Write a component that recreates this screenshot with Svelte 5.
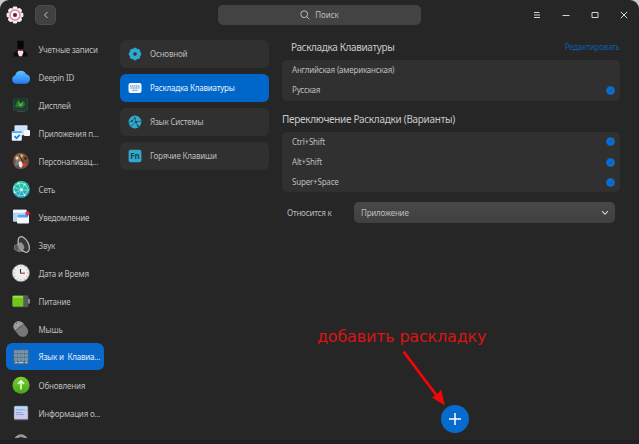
<script>
  const categories = [
    ['accounts', 'Учетные записи'],
    ['cloud', 'Deepin ID'],
    ['display', 'Дисплей'],
    ['apps', 'Приложения п...'],
    ['palette', 'Персонализац...'],
    ['network', 'Сеть'],
    ['notify', 'Уведомление'],
    ['sound', 'Звук'],
    ['clock', 'Дата и Время'],
    ['power', 'Питание'],
    ['mouse', 'Мышь'],
    ['keyboard', 'Язык и\u00a0 Клавиа...'],
    ['update', 'Обновления'],
    ['info', 'Информация о...'],
    ['boot', '']
  ];
  let active = $state('keyboard');

  const pages = [
    ['general', 'Основной'],
    ['layout', 'Раскладка Клавиатуры'],
    ['language', 'Язык Системы'],
    ['shortcuts', 'Горячие Клавиши']
  ];
  let page = $state('layout');

  const layouts = [
    ['Английская (американская)', false],
    ['Русская', true]
  ];
  const switches = [
    ['Ctrl+Shift', true],
    ['Alt+Shift', true],
    ['Super+Space', true]
  ];
  const spokes = [0, 45, 90, 135, 180, 225, 270, 315];
  const ticks = [0, 30, 60, 90, 120, 150, 180, 210, 240, 270, 300, 330];
</script>

{#snippet rows(list)}
  <ul class="panel">
    {#each list as [label, checked]}
      <li>
        <span>{label}</span>
        {#if checked}
          <svg width="9" height="9" viewBox="0 0 9 9"><circle cx="4.5" cy="4.5" r="4.3" fill="#0a6fd2" /><path d="M2.7 4.6 4 5.8 6.4 3.2" fill="none" stroke="#0b4d90" stroke-width=".9" /></svg>
        {/if}
      </li>
    {/each}
  </ul>
{/snippet}

{#snippet icon(name)}
  <svg class="ico" width="20" height="20" viewBox="0 0 20 20">
    {#if name === 'accounts'}
      <path d="M3.500 17.500c-.5-3 1.500-5.500 5-6.500h4c3.500 1 5.500 3.500 5 6.500z" fill="#0b0b0d" />
      <path d="M7.300 1.800h6.400v6.500c0 3-1.600 4.200-3.200 4.200s-3.200-1.200-3.200-4.200z" fill="#060607" />
      <path d="m8.500 11 2 .8 2-.8 1 2-1.500 4.300H9l-1.500-4.300z" fill="#f3dde3" />
      <path d="m8 10 2.500.8L13 10v2l-2.500-.8L8 12z" fill="#a51e40" />
    {:else if name === 'cloud'}
      <defs><linearGradient id="cl" x2="0" y2="1"><stop stop-color="#62c2ff" /><stop offset="1" stop-color="#2379f4" /></linearGradient></defs>
      <path d="M5.800 16.800a4.400 4.400 0 0 1-.6-8.500A5.800 5.800 0 0 1 16.200 7.300 4.900 4.900 0 0 1 16.500 16.800z" fill="url(#cl)" />
    {:else if name === 'display'}
      <rect x="3" y="3.500" width="15" height="12" rx="1" fill="#34434a" />
      <rect x="3.800" y="4.200" width="13.400" height="10" fill="#124126" />
      <path d="M5 12c2-4 1-6 4-7l2 5 3-4 1 4-3 3z" fill="#26743a" />
      <path d="m8 6 2 3 3-3-1 5H9z" fill="#79a13b" />
      <path d="M7 16.500h8" stroke="#40484c" />
    {:else if name === 'apps'}
      <rect x="4.500" y="2.300" width="13" height="10" rx="1" fill="#cfe3f8" />
      <rect x="14" y="7" width="6" height="6" rx="1" fill="#f4f8fe" />
      <rect x="1.800" y="8.300" width="10" height="9.500" rx="1" fill="#eef5fd" />
      <path d="M1.800 9.200h10" stroke="#4ca7f6" stroke-width="1.800" />
      <path d="m4.500 13.200 2 2 3.400-3.400" fill="none" stroke="#1687ed" stroke-width="1.700" />
    {:else if name === 'palette'}
      <path d="M10 1.800c5 0 8.800 3.800 8.800 8.500 0 5-4 7.900-8 7.900-5 0-7.700-3.500-7.700-8S6 1.800 10 1.800z" fill="#76513e" />
      <path d="M5 6c2-3 6-4 9-2l-2 5-6 3z" fill="#9b745c" />
      <circle cx="7" cy="7" r="1.500" fill="#e7d9c8" /><circle cx="11.500" cy="4.700" r="1.300" fill="#e6b35b" /><circle cx="15.500" cy="7.500" r="1.300" fill="#33261f" />
      <circle cx="6.500" cy="13" r="1.600" fill="#3796c9" /><path d="m8.500 11 2.500-1 2 4-2 3-2-2z" fill="#f2f1ef" /><circle cx="14.500" cy="13.700" r="1.900" fill="#d6373a" />
      <path d="m9 4 4 7" stroke="#342720" />
    {:else if name === 'network'}
      <defs><linearGradient id="nt" x2="0" y2="1"><stop stop-color="#2bc9a0" /><stop offset="1" stop-color="#239cc7" /></linearGradient></defs>
      <circle cx="11.200" cy="10.400" r="8.600" fill="url(#nt)" />
      <path d="m3.500 8 5-4 6 1 4 6-4 5-6 1-4-4zm0 0 8 3 3-6m-3 6 3 5m-3-5-7 3m4-10 3 7 7 0m-10 6 3-6" fill="none" stroke="#a5efde" stroke-width=".7" />
      <g fill="#d9fff5"><circle cx="11.500" cy="10.700" r="1.300" /><circle cx="8.500" cy="4.500" r=".9" /><circle cx="14.500" cy="5.500" r=".9" /><circle cx="4.500" cy="13" r=".9" /><circle cx="14.500" cy="16" r=".9" /></g>
    {:else if name === 'notify'}
      <rect x="3" y="2.800" width="13.500" height="12" rx="1" fill="#b8d2ee" />
      <path d="M3 4.300h13.500" stroke="#f2f7fd" stroke-width="3" />
      <rect x="7" y="7" width="12" height="9.500" rx="1" fill="#f4f8fe" />
      <rect x="7.500" y="7.500" width="10.500" height="3" fill="#4ba7f3" />
      <circle cx="17.500" cy="6.500" r="2.200" fill="#df304b" />
    {:else if name === 'sound'}
      <path d="M4.500 10.500 8 9l1.500 8-5-2.500z" fill="#555" stroke="#999" stroke-width=".6" />
      <path d="m7 9.500 3-7.500 8 15.500-9.500-1z" fill="#777" />
      <ellipse cx="13.700" cy="9.500" rx="4.700" ry="8.400" transform="rotate(-27 13.700 9.500)" fill="#373737" stroke="#bcbcbc" stroke-width="1.200" />
      <ellipse cx="11.500" cy="11" rx="2.300" ry="4" transform="rotate(-27 11.500 11)" fill="#929292" />
    {:else if name === 'clock'}
      <circle cx="10.900" cy="10" r="8.600" fill="#eeeeed" stroke="#999" stroke-width=".5" />
      {#each ticks as a}<path d="M10.900 2.500v1.200" stroke="#888" stroke-width=".7" transform="rotate({a} 10.900 10)" />{/each}
      <path d="M10.500 6v4" stroke="#333" stroke-width="1.100" /><path d="M10.200 10.200h4.700" stroke="#bd2d42" stroke-width="1.200" />
    {:else if name === 'power'}
      <rect x="2.300" y="4.300" width="16" height="12" rx="1.500" fill="#555b5b" />
      <path d="M19 8v4.500" stroke="#ccc" stroke-width="1.200" />
      <rect x="2.500" y="4.800" width="10.800" height="10.700" rx="1" fill="#70c915" />
      <path d="M3 5.900h10" stroke="#a1e84a" stroke-width="1.500" />
    {:else if name === 'mouse'}
      <g transform="rotate(-38 10.800 10)"><rect x="5.300" y="1.500" width="11" height="17" rx="5.500" fill="#777" /><path d="M5.300 8c0-4 2.300-6.500 5.500-6.500S16.300 4 16.300 8z" fill="#999" /><path d="M5.300 8h11M10.800 2v6" stroke="#565656" stroke-width=".8" /><path d="M10.800 4v2.500" stroke="#ddd" /></g>
    {:else if name === 'keyboard'}
      <rect x="3.300" y="2.500" width="15.500" height="15" rx="1" fill="#456984" />
      {#each [3.500, 7.200, 10.900] as y}{#each [4.500, 8, 11.500, 15] as x}<rect {x} {y} width="2.600" height="2.600" rx=".5" fill="#718b9b" stroke="#a9bcc6" stroke-width=".4" />{/each}{/each}
      <path d="M5 15.500h2.500m1 0h5m1.500 0h2.500" stroke="#b5c3cc" stroke-width="1.300" />
    {:else if name === 'update'}
      <defs><linearGradient id="up" x2="0" y2="1"><stop stop-color="#77ce35" /><stop offset="1" stop-color="#45a713" /></linearGradient></defs>
      <circle cx="11" cy="10.200" r="8.500" fill="url(#up)" /><path d="M11 14.500v-8M7.900 9 11 5.900 14.100 9" fill="none" stroke="#eaffdb" stroke-width="1.600" />
    {:else if name === 'info'}
      <rect x="3.800" y="2.800" width="14.500" height="14.500" rx="1.500" fill="#6e7884" /><rect x="4.500" y="3.300" width="13" height="12.500" rx=".8" fill="#bfd6f6" /><rect x="4.500" y="9" width="13" height="6.800" fill="#d0c9ef" /><path d="M6 6.800h9.500M6 9.500h6.500M6 11.500h8" stroke="#7493bd" stroke-width=".7" />
    {:else}
      <circle cx="11" cy="10.500" r="7.200" fill="#999" /><circle cx="11" cy="10.500" r="4.600" fill="#333" /><circle cx="11" cy="9.500" r="1.900" fill="#ddd" />
    {/if}
  </svg>
{/snippet}

<div class="window">
  <header>
    <svg class="logo" width="18" height="18" viewBox="0 0 18 18">
      {#each spokes as a}<rect x="6.700" y=".6" width="4.600" height="5" rx="1.300" fill="#edf0f8" transform="rotate({a} 9 9)" />{/each}
      <circle cx="9" cy="9" r="6.900" fill="#edf0f8" /><circle cx="9" cy="9" r="5" fill="#fff" stroke="#ee7d92" stroke-width="1.500" /><circle cx="9" cy="9" r="2" fill="#3f3038" stroke="#b94a62" stroke-width=".4" />
    </svg>
    <button class="back" aria-label="Назад"><svg width="6" height="8" viewBox="0 0 6 8"><path d="M4.500 1 1.500 4l3 3" fill="none" stroke="#c5c5c5" /></svg></button>
    <div class="search">
      <svg width="10" height="10" viewBox="0 0 10 10"><circle cx="4.200" cy="4.200" r="3.400" fill="none" stroke="#bbb" /><path d="m6.700 6.700 2.700 2.700" stroke="#bbb" /></svg>
      <span>Поиск</span>
    </div>
    <div class="controls">
      <svg width="8" height="8" viewBox="0 0 8 8"><path d="M1 1.500h5.500M1 4h6M1 6.500h6" stroke="#d5d5d5" /></svg>
      <svg width="8" height="8" viewBox="0 0 8 8"><path d="M.5 4.500h7" stroke="#d5d5d5" /></svg>
      <svg width="8" height="8" viewBox="0 0 8 8"><path d="M1 1.500h6v5H1z" fill="none" stroke="#d5d5d5" /></svg>
      <svg width="8" height="8" viewBox="0 0 8 8"><path d="m.8.8 6.400 6.400M7.200.8.8 7.200" stroke="#d5d5d5" /></svg>
    </div>
  </header>

  <main>
    <nav class="side">
      {#each categories as [id, label]}
        <button class:active={active === id} onclick={() => (active = id)}>{@render icon(id)}<span>{label}</span></button>
      {/each}
    </nav>

    <nav class="pages">
      {#each pages as [id, label]}
        <button class:active={page === id} onclick={() => (page = id)}>
          <svg width="14" height="14" viewBox="0 0 14 14">
            {#if id === 'general'}
              {#each spokes as a}<rect x="5.300" y=".8" width="3.400" height="4" rx=".8" fill="#2fa9ce" transform="rotate({a} 7 7)" />{/each}
              <circle cx="7" cy="7" r="3.500" fill="none" stroke="#2fa9ce" stroke-width="3.400" />
            {:else if id === 'layout'}
              <rect x=".5" y="2" width="13" height="10" rx="2" fill="#f3f7ff" /><path d="M2 5h10M2.500 7h9M4.500 9.300h5" stroke="#4278c9" stroke-dasharray="1.300 .6" />
            {:else if id === 'language'}
              <circle cx="7" cy="7" r="6.400" fill="#2fa9ce" /><path d="M1 7c3 0 4-1 6-5m0 0 1 5 5-1M8 7l2 5M8 7l-5 4" fill="none" stroke="#24404a" stroke-width=".7" /><g fill="#24404a"><circle cx="8" cy="7" r="1.100" /><circle cx="4" cy="6" r=".9" /><circle cx="10" cy="11" r=".9" /></g>
            {:else}
              <rect x=".6" y=".8" width="12.800" height="12.400" rx="2" fill="#2fa9ce" /><text x="7" y="10.100" text-anchor="middle">Fn</text>
            {/if}
          </svg>
          <span>{label}</span>
        </button>
      {/each}
    </nav>

    <section>
      <div class="head"><h2>Раскладка Клавиатуры</h2><a href="#edit">Редактировать</a></div>
      {@render rows(layouts)}
      <h2 class="second">Переключение Раскладки (Варианты)</h2>
      {@render rows(switches)}
      <div class="scope">
        <span>Относится к</span>
        <div class="select"><span>Приложение</span><svg width="8" height="6" viewBox="0 0 8 6"><path d="m1 1.200 3 3 3-3" fill="none" stroke="#d0d0d0" stroke-width="1.100" /></svg></div>
      </div>
    </section>
  </main>

  <div class="note">добавить раскладку</div>
  <svg class="arrow" width="50" height="62" viewBox="0 0 50 62"><path d="M4.500 3.500 38 48" stroke="#f50505" stroke-width="2.800" /><path d="M46 57.500 33 49.500 38 46.500 42 41.500z" fill="#f50505" /></svg>
  <button class="add" aria-label="Добавить"><svg width="14" height="14" viewBox="0 0 14 14"><path d="M7 1v12M1 7h12" stroke="#fff" stroke-width="1.500" /></svg></button>
</div>

<style>
  :global(body) { margin: 0; background: #c9c9c9; }
  .window { position: relative; box-sizing: border-box; width: 639px; height: 444px; overflow: hidden; border-radius: 9px 9px 0 0; background: #262626; border-bottom: 4px solid #202020; color: #bebebe; font: 8px/12px "Noto Sans", "Open Sans", sans-serif; letter-spacing: -.2px; }
  button { display: flex; align-items: center; box-sizing: border-box; margin: 0; padding: 0; border: 0; background: none; color: inherit; font: inherit; letter-spacing: inherit; white-space: pre; }
  svg { display: block; flex: none; }
  header { display: flex; align-items: flex-start; height: 33px; }
  .logo { margin: 6px 0 0 6px; }
  .back { justify-content: center; width: 21px; height: 20px; margin: 5px 0 0 11px; border: 1px solid #4d4d4d; border-radius: 5px; background: #414141; }
  .search { display: flex; align-items: center; justify-content: center; gap: 5px; width: 203px; height: 20px; margin: 5px 0 0 162px; border-radius: 5px; background: #434343; letter-spacing: -.1px; }
  .controls { display: flex; gap: 21px; margin: 11px 0 0 112px; }
  main { display: flex; height: 405px; }
  .side { width: 98px; margin-left: 6px; padding-top: 2px; overflow: hidden; }
  .side button { width: 98px; height: 28px; padding-left: 4px; border-radius: 6px; }
  .side button span { margin-left: 8.500px; padding-top: 1px; }
  .side .active { background: #0868cb; color: #e4efff; background-clip: padding-box; border-bottom: 1px solid transparent; }
  .pages { display: flex; flex-direction: column; gap: 6px; width: 149px; margin-left: 16px; padding-top: 7px; }
  .pages button { height: 28px; padding-left: 8px; border-radius: 6px; background: #303030; }
  .pages button span { margin-left: 8px; }
  .pages .active { background: #0067ca; color: #e8f1ff; }
  text { font: bold 8px "Noto Sans", sans-serif; fill: #21404b; letter-spacing: 0; }
  section { width: 338px; margin-left: 13px; }
  .head { display: flex; justify-content: space-between; align-items: center; height: 27px; padding: 1px 0 0 9px; box-sizing: border-box; }
  h2 { margin: 0; font-size: 10px; line-height: 14px; font-weight: 400; color: #c8c8c8; letter-spacing: -.37px; }
  a { color: #0c5cac; text-decoration: none; }
  ul { list-style: none; margin: 0; padding: 0; border-radius: 5px; background: #303030; }
  li { display: flex; align-items: center; justify-content: space-between; height: 20.300px; padding: 0 5px 0 10px; }
  .second { margin: 11px 0 6px; letter-spacing: -.3px; }
  .scope { display: flex; align-items: center; justify-content: space-between; height: 21px; margin: 10px 5px 0; }
  .select { display: flex; align-items: center; justify-content: space-between; box-sizing: border-box; width: 261px; height: 21px; padding: 0 6px 0 7px; border-radius: 5px; background: linear-gradient(#484848, #404040); }
  .note { position: absolute; left: 317px; top: 327px; color: #da1313; font: 16px/20px "DejaVu Sans", sans-serif; letter-spacing: -.2px; white-space: nowrap; }
  .arrow { position: absolute; left: 399px; top: 348px; }
  .add { position: absolute; left: 441px; top: 405px; width: 28px; height: 28px; justify-content: center; border-radius: 50%; background: #066bcf; }
</style>
